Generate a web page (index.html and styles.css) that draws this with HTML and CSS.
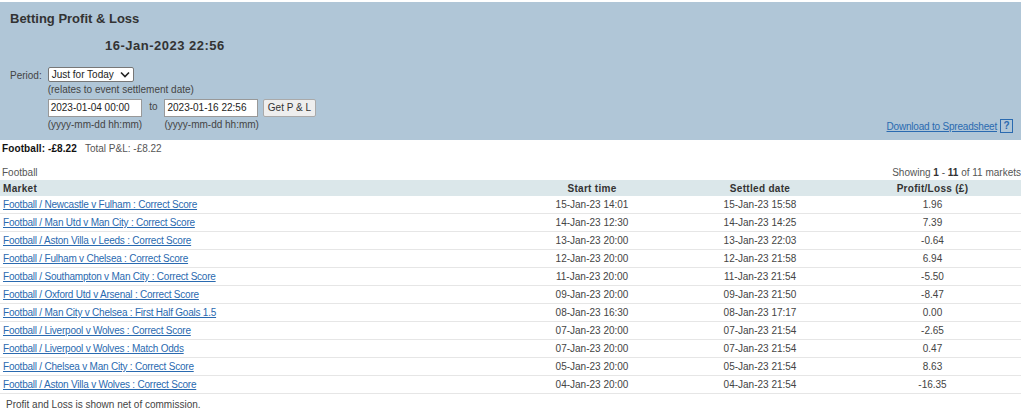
FILE: index.html
```html
<!DOCTYPE html>
<html>
<head>
<meta charset="utf-8">
<link rel="stylesheet" href="styles.css">
</head>
<body>
<div class="panel">
  <h1 class="title">Betting Profit &amp; Loss</h1>
  <div class="now">16-Jan-2023 22:56</div>
  <div class="form">
    <div class="period-row">
      <span class="lbl">Period:</span>
      <div class="period-col">
        <div class="select">Just for Today<svg class="chev" width="10" height="7" viewBox="0 0 10 7"><path d="M1 1.5 L5 5.5 L9 1.5" fill="none" stroke="#222" stroke-width="1.6"/></svg></div>
        <div class="note">(relates to event settlement date)</div>
        <div class="dates">
          <div class="dcol">
            <div class="input">2023-01-04 00:00</div>
            <div class="note">(yyyy-mm-dd hh:mm)</div>
          </div>
          <span class="to">to</span>
          <div class="dcol">
            <div class="input">2023-01-16 22:56</div>
            <div class="note">(yyyy-mm-dd hh:mm)</div>
          </div>
          <div class="btn">Get P &amp; L</div>
        </div>
      </div>
    </div>
    <div class="dl"><a href="#">Download to Spreadsheet</a><span class="help">?</span></div>
  </div>
</div>
<div class="summary"><b>Football: -£8.22</b><span class="total">Total P&amp;L: -£8.22</span></div>
<div class="caption"><span>Football</span><span>Showing <b>1</b> - <b>11</b> of 11 markets</span></div>
<table class="grid">
  <thead>
    <tr><th class="mk">Market</th><th class="c1">Start time</th><th class="c2">Settled date</th><th class="c3">Profit/Loss (£)</th></tr>
  </thead>
  <tbody>
    <tr><td class="mk"><a href="#">Football / Newcastle v Fulham : Correct Score</a></td><td>15-Jan-23 14:01</td><td>15-Jan-23 15:58</td><td>1.96</td></tr>
    <tr><td class="mk"><a href="#">Football / Man Utd v Man City : Correct Score</a></td><td>14-Jan-23 12:30</td><td>14-Jan-23 14:25</td><td>7.39</td></tr>
    <tr><td class="mk"><a href="#">Football / Aston Villa v Leeds : Correct Score</a></td><td>13-Jan-23 20:00</td><td>13-Jan-23 22:03</td><td>-0.64</td></tr>
    <tr><td class="mk"><a href="#">Football / Fulham v Chelsea : Correct Score</a></td><td>12-Jan-23 20:00</td><td>12-Jan-23 21:58</td><td>6.94</td></tr>
    <tr><td class="mk"><a href="#">Football / Southampton v Man City : Correct Score</a></td><td>11-Jan-23 20:00</td><td>11-Jan-23 21:54</td><td>-5.50</td></tr>
    <tr><td class="mk"><a href="#">Football / Oxford Utd v Arsenal : Correct Score</a></td><td>09-Jan-23 20:00</td><td>09-Jan-23 21:50</td><td>-8.47</td></tr>
    <tr><td class="mk"><a href="#">Football / Man City v Chelsea : First Half Goals 1.5</a></td><td>08-Jan-23 16:30</td><td>08-Jan-23 17:17</td><td>0.00</td></tr>
    <tr><td class="mk"><a href="#">Football / Liverpool v Wolves : Correct Score</a></td><td>07-Jan-23 20:00</td><td>07-Jan-23 21:54</td><td>-2.65</td></tr>
    <tr><td class="mk"><a href="#">Football / Liverpool v Wolves : Match Odds</a></td><td>07-Jan-23 20:00</td><td>07-Jan-23 21:54</td><td>0.47</td></tr>
    <tr><td class="mk"><a href="#">Football / Chelsea v Man City : Correct Score</a></td><td>05-Jan-23 20:00</td><td>05-Jan-23 21:54</td><td>8.63</td></tr>
    <tr><td class="mk"><a href="#">Football / Aston Villa v Wolves : Correct Score</a></td><td>04-Jan-23 20:00</td><td>04-Jan-23 21:54</td><td>-16.35</td></tr>
  </tbody>
</table>
<p class="foot">Profit and Loss is shown net of commission.</p>
</body>
</html>
```
FILE: styles.css
```css
body {
  margin: 0;
  width: 1021px;
  font-family: "Liberation Sans", Arial, sans-serif;
  font-size: 10px;
  color: #444;
  background: #fff;
}
.panel {
  margin-top: 2px;
  background: #b0c6d7;
  height: 138px;
  box-sizing: border-box;
  padding: 10px 0 0 10px;
  display: flex;
  flex-direction: column;
}
.title {
  margin: 0;
  font-size: 13px;
  font-weight: bold;
  color: #333;
  line-height: 14px;
}
.now {
  margin: 13px 0 0 95px;
  font-size: 13px;
  font-weight: bold;
  letter-spacing: 0.5px;
  color: #333;
  line-height: 14px;
}
.form {
  display: flex;
  justify-content: space-between;
  align-items: flex-end;
  margin-top: 14px;
  padding-right: 8px;
}
.period-row {
  display: flex;
  gap: 6px;
}
.lbl {
  padding-top: 2px;
  line-height: 14px;
}
.period-col {
  display: flex;
  flex-direction: column;
}
.select {
  width: 86px;
  height: 15px;
  box-sizing: border-box;
  border: 1px solid #777;
  border-radius: 2px;
  background: #fff;
  color: #222;
  padding-left: 3px;
  line-height: 13px;
  display: flex;
  justify-content: space-between;
  align-items: center;
  padding-right: 3px;
}
.note {
  line-height: 14px;
  margin-top: 1px;
}
.dates {
  display: flex;
  align-items: flex-start;
  margin-top: 2px;
}
.dcol {
  display: flex;
  flex-direction: column;
}
.input {
  width: 94px;
  height: 18px;
  box-sizing: border-box;
  border: 1px solid #999;
  background: #fff;
  color: #222;
  padding-left: 2px;
  line-height: 16px;
}
.to {
  margin: 0 7px;
  line-height: 16px;
}
.btn {
  margin-left: 4px;
  width: 53px;
  height: 18px;
  box-sizing: border-box;
  border: 1px solid #aaa;
  border-radius: 2px;
  background: #eee;
  color: #333;
  text-align: center;
  line-height: 16px;
}
.dl {
  display: flex;
  align-items: center;
  gap: 3px;
  margin-bottom: -1px;
}
.dl a {
  color: #2a6ab0;
  letter-spacing: -0.2px;
}
.help {
  display: inline-block;
  width: 13px;
  height: 14px;
  box-sizing: border-box;
  border: 1px solid #2a6ab0;
  color: #2a6ab0;
  font-weight: bold;
  text-align: center;
  line-height: 12px;
}
.summary {
  margin: 2px 0 0 2px;
  line-height: 14px;
  color: #555;
  display: flex;
  gap: 8px;
}
.summary b {
  color: #111;
  letter-spacing: 0.1px;
}
.caption {
  display: flex;
  justify-content: space-between;
  margin-top: 10px;
  padding-left: 2px;
  line-height: 14px;
  color: #555;
}
.caption b {
  color: #333;
}
.grid {
  width: 1021px;
  border-collapse: collapse;
  table-layout: fixed;
}
.grid th {
  background: #dbe7ea;
  color: #333;
  font-weight: bold;
  height: 16px;
  padding: 0;
  text-align: center;
  letter-spacing: 0.3px;
}
.grid th.mk {
  width: 505px;
  text-align: left;
  padding-left: 3px;
}
.grid th.c1, .grid th.c2 {
  width: 168px;
}
.grid td {
  height: 17px;
  padding: 0;
  text-align: center;
  border-bottom: 1px solid #e6e6e6;
  color: #444;
}
.grid td.mk {
  text-align: left;
  padding-left: 3px;
}
.grid td a {
  color: #2a6ab0;
  letter-spacing: -0.22px;
}
.foot {
  margin: 4px 0 0 6px;
  line-height: 14px;
  color: #444;
}
```
